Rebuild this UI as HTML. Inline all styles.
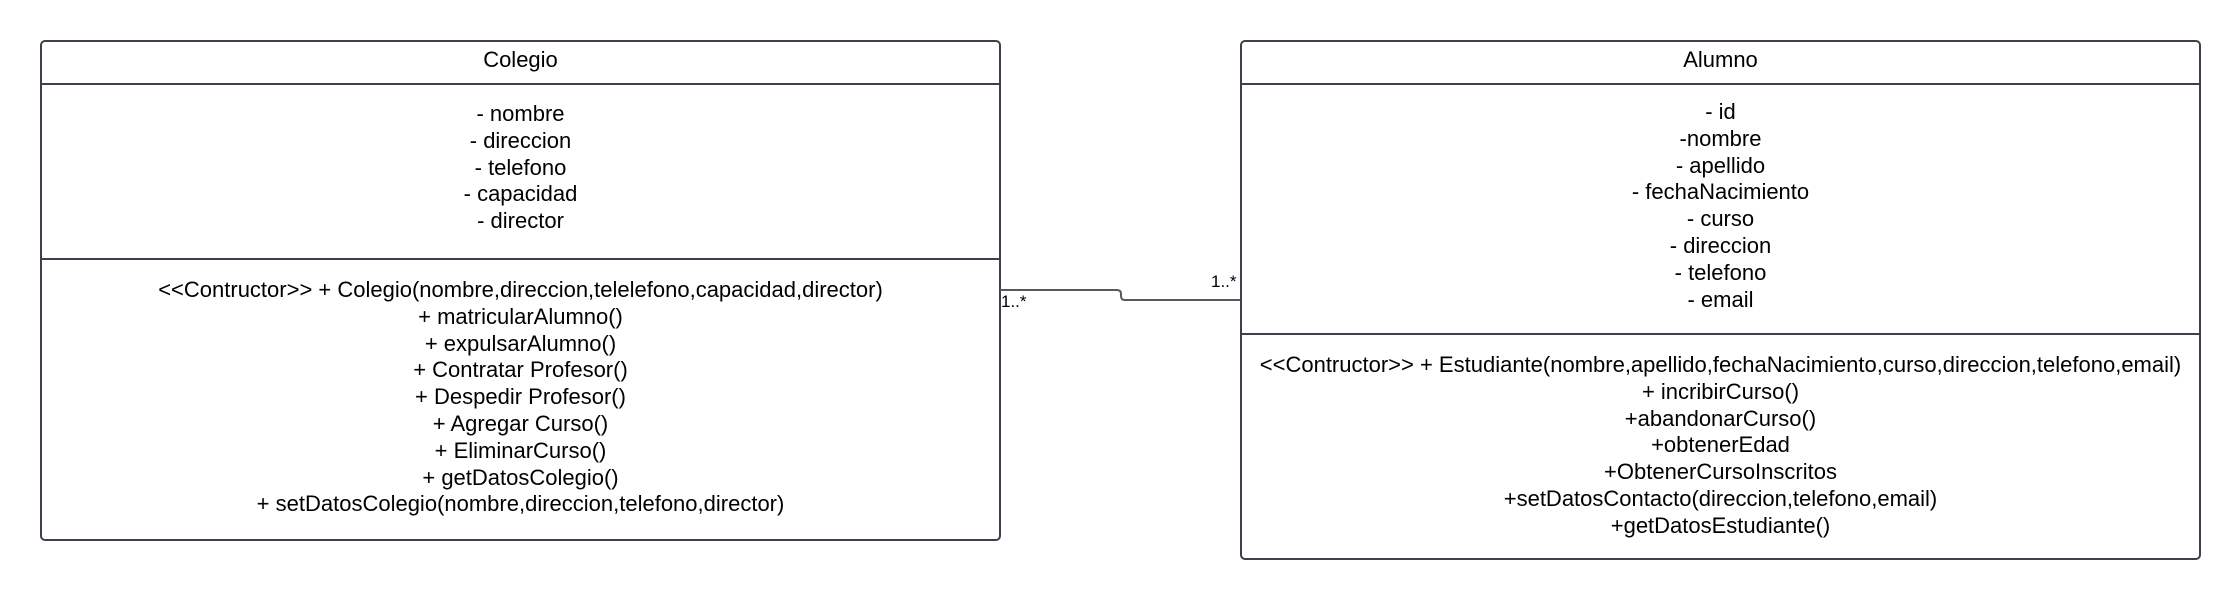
<!DOCTYPE html>
<html><head><style>
body{margin:0;width:2240px;height:600px;background:#fff;position:relative;font-family:"Liberation Sans",Arial,sans-serif;color:#000;overflow:hidden}
.box{position:absolute;border:2px solid #3a414a;border-radius:5px;box-sizing:border-box}
.t{position:absolute;left:0;right:0;text-align:center;font-size:22px;line-height:26.8px;white-space:nowrap}
.hr{position:absolute;left:0;right:0;height:0;border-top:2px solid #3a414a}
.lbl{position:absolute;font-size:17px}
</style></head><body>
<div class="box" style="left:40px;top:40px;width:961px;height:501px">
 <div class="t" style="top:5px">Colegio</div>
 <div class="hr" style="top:41px"></div>
 <div class="t" style="top:59px">- nombre<br>- direccion<br>- telefono<br>- capacidad<br>- director</div>
 <div class="hr" style="top:216px"></div>
 <div class="t" style="top:235px">&lt;&lt;Contructor&gt;&gt; + Colegio(nombre,direccion,telelefono,capacidad,director)<br>+ matricularAlumno()<br>+ expulsarAlumno()<br>+ Contratar Profesor()<br>+ Despedir Profesor()<br>+ Agregar Curso()<br>+ EliminarCurso()<br>+ getDatosColegio()<br>+ setDatosColegio(nombre,direccion,telefono,director)</div>
</div>
<div class="box" style="left:1240px;top:40px;width:961px;height:520px">
 <div class="t" style="top:5px">Alumno</div>
 <div class="hr" style="top:41px"></div>
 <div class="t" style="top:57px">- id<br>-nombre<br>- apellido<br>- fechaNacimiento<br>- curso<br>- direccion<br>- telefono<br>- email</div>
 <div class="hr" style="top:291px"></div>
 <div class="t" style="top:310px">&lt;&lt;Contructor&gt;&gt; + Estudiante(nombre,apellido,fechaNacimiento,curso,direccion,telefono,email)<br>+ incribirCurso()<br>+abandonarCurso()<br>+obtenerEdad<br>+ObtenerCursoInscritos<br>+setDatosContacto(direccion,telefono,email)<br>+getDatosEstudiante()</div>
</div>
<svg style="position:absolute;left:0;top:0" width="2240" height="600">
<path d="M1000 290 H1117 Q1121 290 1121 294 V296 Q1121 300 1125 300 H1240" fill="none" stroke="#555a60" stroke-width="2"/>
</svg>
<div class="lbl" style="left:1001px;top:292px">1..*</div>
<div class="lbl" style="left:1211px;top:272px">1..*</div>
</body></html>
